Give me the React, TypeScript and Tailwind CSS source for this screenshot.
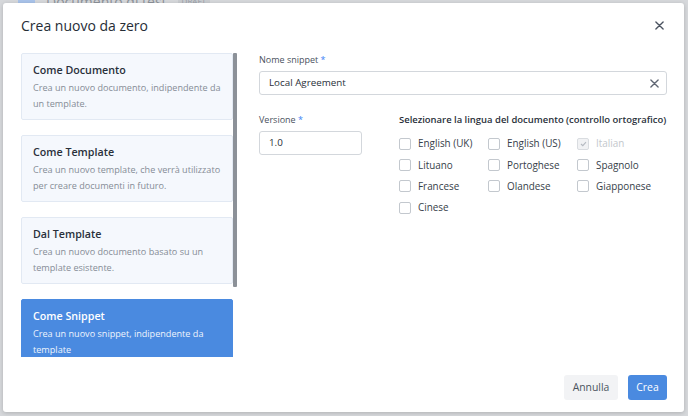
import React from "react";

const font = { fontFamily: '"Open Sans", "Noto Sans", sans-serif' };

type Card = { title: string; desc: string; selected?: boolean };

const cards: Card[] = [
  { title: "Come Documento", desc: "Crea un nuovo documento, indipendente da un template." },
  { title: "Come Template", desc: "Crea un nuovo template, che verrà utilizzato per creare documenti in futuro." },
  { title: "Dal Template", desc: "Crea un nuovo documento basato su un template esistente." },
  { title: "Come Snippet", desc: "Crea un nuovo snippet, indipendente da template", selected: true },
];

const langs: { name: string; checked?: boolean; disabled?: boolean }[] = [
  { name: "English (UK)" },
  { name: "English (US)" },
  { name: "Italian", checked: true, disabled: true },
  { name: "Lituano" },
  { name: "Portoghese" },
  { name: "Spagnolo" },
  { name: "Francese" },
  { name: "Olandese" },
  { name: "Giapponese" },
  { name: "Cinese" },
];

function XIcon({ size, className }: { size: number; className?: string }) {
  return (
    <svg width={size} height={size} viewBox="0 0 10 10" className={className}>
      <path d="M1 1L9 9M9 1L1 9" stroke="currentColor" strokeWidth="1.5" strokeLinecap="round" />
    </svg>
  );
}

export default function App() {
  return (
    <div className="relative w-[688px] h-[416px] overflow-hidden bg-[#d6d8db]" style={font}>
      <div className="flex items-center gap-[11px] pl-[18px] -mt-[8px] h-[18px]">
        <div className="w-[17px] h-[13px] bg-[#a9c3ea] rounded-[2px]" />
        <span className="text-[14px] text-[#8e939a]">Documento di test</span>
        <span className="text-[8px] text-[#9aa0a8] bg-[#c9ccd0] px-1 rounded">DRAFT</span>
      </div>
      <div className="absolute left-[3px] top-[3px] w-[681px] h-[409px] bg-white rounded-[3px] shadow-[0_1px_4px_rgba(0,0,0,0.18)] flex flex-col">
        <div className="h-[44px] flex items-center justify-between pl-[18px] pr-[20px] shrink-0">
          <h1 className="text-[14px] text-[#262d36]">Crea nuovo da zero</h1>
          <XIcon size={9} className="text-[#4b5360]" />
        </div>
        <div className="flex pl-[18px] pt-[6px] gap-[22px]">
          <div className="relative w-[216px] h-[304px] overflow-hidden shrink-0">
            <div className="flex flex-col gap-[15px] w-[212px]">
              {cards.map((c) => (
                <div
                  key={c.title}
                  className={
                    c.selected
                      ? "h-[67px] shrink-0 rounded-[2px] border border-[#4a8ae0] bg-[#4a8ae0] px-[11px] pt-[8px]"
                      : "h-[67px] shrink-0 rounded-[2px] border border-[#e2e9f3] bg-[#f5f8fd] px-[11px] pt-[8px]"
                  }
                >
                  <div className={c.selected ? "text-[10.7px] leading-[16px] font-semibold text-white" : "text-[10.7px] leading-[16px] font-semibold text-[#29303a]"}>
                    {c.title}
                  </div>
                  <div className={c.selected ? "mt-[2px] text-[9.1px] leading-[15.5px] text-[#eef4fd]" : "mt-[2px] text-[9.1px] leading-[15.5px] text-[#858c96]"}>
                    {c.desc}
                  </div>
                </div>
              ))}
            </div>
            <div className="absolute right-0 top-0 w-[4px] h-[234px] bg-[#8c9198] rounded-[1px]" />
          </div>
          <div className="w-[408px] flex flex-col">
            <label className="text-[9px] leading-[14px] text-[#4a525e]">
              Nome snippet <span className="text-[#3b82f6]">*</span>
            </label>
            <div className="mt-[4px] h-[24px] border border-[#d3d7dc] rounded-[3px] flex items-center justify-between pl-[9px] pr-[7px]">
              <span className="text-[9.8px] text-[#29303a]">Local Agreement</span>
              <XIcon size={9} className="text-[#5f6673]" />
            </div>
            <div className="flex mt-[18px] gap-[37px]">
              <div className="w-[103px] shrink-0 flex flex-col">
                <label className="text-[9px] leading-[14px] text-[#4a525e]">
                  Versione <span className="text-[#3b82f6]">*</span>
                </label>
                <div className="mt-[4px] h-[24px] border border-[#d3d7dc] rounded-[3px] flex items-center pl-[9px]">
                  <span className="text-[9.8px] text-[#29303a]">1.0</span>
                </div>
              </div>
              <div className="flex flex-col">
                <div className="text-[9.45px] leading-[14px] font-semibold text-[#29303a] whitespace-nowrap">
                  Selezionare la lingua del documento (controllo ortografico)
                </div>
                <div className="grid grid-cols-[89px_89px_89px] mt-[6px]">
                  {langs.map((l) => (
                    <div key={l.name} className="flex items-center h-[21.3px] gap-[7px]">
                      <div
                        className={
                          l.disabled
                            ? "w-[12px] h-[12px] rounded-[2px] border border-[#d9dce0] bg-[#f1f2f4] flex items-center justify-center"
                            : "w-[12px] h-[12px] rounded-[2px] border border-[#c3c8ce] bg-white"
                        }
                      >
                        {l.checked && (
                          <svg width="7" height="6" viewBox="0 0 7 6">
                            <path d="M1 3L2.8 4.7L6 1.2" stroke="#b5bac1" strokeWidth="1.1" fill="none" />
                          </svg>
                        )}
                      </div>
                      <span className={l.disabled ? "text-[9.9px] text-[#c3c7cc]" : "text-[9.9px] text-[#363e49]"}>{l.name}</span>
                    </div>
                  ))}
                </div>
              </div>
            </div>
          </div>
        </div>
        <div className="flex justify-end gap-[10px] pr-[17px] mt-[18px]">
          <button className="h-[25px] w-[54px] rounded-[3px] bg-[#f2f3f5] text-[10.4px] text-[#4b5360]">Annulla</button>
          <button className="h-[25px] w-[39px] rounded-[3px] bg-[#4a8ae0] text-[10.4px] text-white">Crea</button>
        </div>
      </div>
    </div>
  );
}
